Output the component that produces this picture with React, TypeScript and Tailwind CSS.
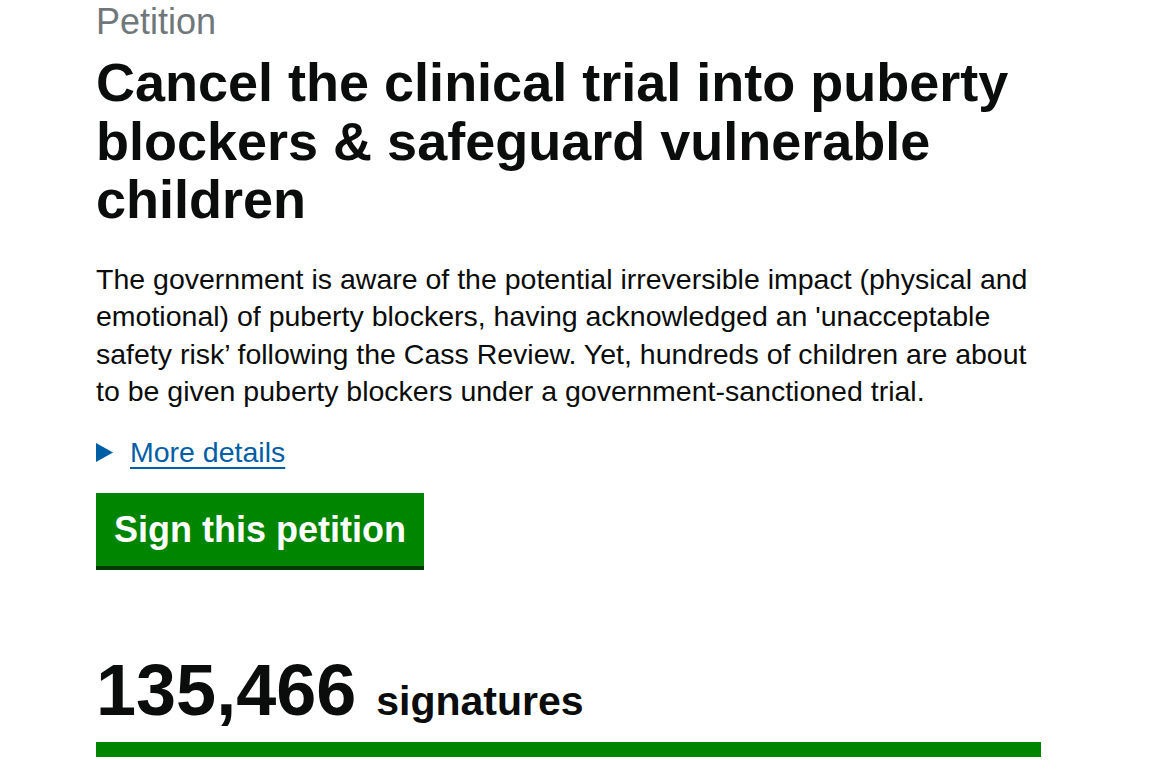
export default function App() {
  return (
    <div className="min-h-screen bg-white font-['Liberation_Sans',Arial,sans-serif] text-[#0b0c0c]">
      <main className="ml-[96px] w-[945px]">
        <span className="block text-[36px] leading-[44px] text-[#6f777b]">Petition</span>

        <h1 className="mt-[9px] text-[54px] font-bold leading-[58.5px]">
          Cancel the clinical trial into puberty blockers &amp; safeguard vulnerable children
        </h1>

        <p className="mt-[32px] text-[28.5px] leading-[37.5px]">
          The government is aware of the potential irreversible impact (physical and emotional) of puberty
          blockers, having acknowledged an 'unacceptable safety risk’ following the Cass Review. Yet, hundreds
          of children are about to be given puberty blockers under a government-sanctioned trial.
        </p>

        {/* details toggle */}
        <div className="mt-[23px] flex items-center text-[28.5px] leading-[37.5px]">
          <svg width="18" height="19" viewBox="0 0 18 19" className="shrink-0">
            <polygon points="0,0 17,9.5 0,19" fill="#005ea5" />
          </svg>
          <a href="#" className="ml-[16px] text-[#005ea5] underline decoration-[2px] underline-offset-[5px]">
            More details
          </a>
        </div>

        <div className="mt-[22px]">
          <button className="h-[73px] bg-[#008500] px-[18px] text-[36px] font-bold text-white shadow-[0_4px_0_#003a00]">
            Sign this petition
          </button>
        </div>

        <p className="mt-[84px] text-[72px] font-bold leading-[80px]">
          135,466 <span className="text-[41px]">signatures</span>
        </p>

        <div className="mt-[1px] h-[15px] w-full bg-[#008500]" />
      </main>
    </div>
  )
}
